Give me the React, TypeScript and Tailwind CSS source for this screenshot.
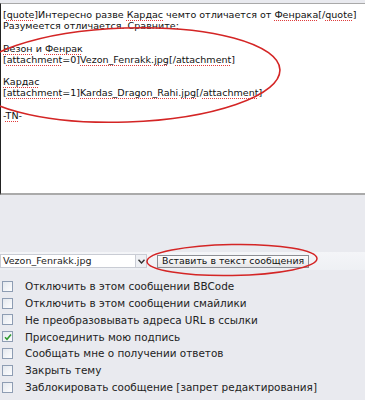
const font = "[font-family:'DejaVu_Sans',Verdana,sans-serif]";
const spell = "underline decoration-dotted decoration-[#e03a3a] underline-offset-[2px]";

function Sp({ children }: { children: React.ReactNode }) {
  return <span className={spell}>{children}</span>;
}

const options = [
  { label: "Отключить в этом сообщении BBCode", checked: false },
  { label: "Отключить в этом сообщении смайлики", checked: false },
  { label: "Не преобразовывать адреса URL в ссылки", checked: false },
  { label: "Присоединить мою подпись", checked: true },
  { label: "Сообщать мне о получении ответов", checked: false },
  { label: "Закрыть тему", checked: false },
  { label: "Заблокировать сообщение [запрет редактирования]", checked: false },
];

function Box({ checked }: { checked: boolean }) {
  return (
    <span className="flex h-[11px] w-[11px] shrink-0 items-center justify-center border border-[#8e9db3] bg-[linear-gradient(135deg,#e4e8ee,#fdfdfe)]">
      {checked && (
        <svg width="8" height="8" viewBox="0 0 8 8">
          <path d="M1 4.2 L3 6.2 L7 1.5" fill="none" stroke="#2f9a2f" strokeWidth="1.6" />
        </svg>
      )}
    </span>
  );
}

export default function App() {
  return (
    <div className={`relative h-[400px] w-[365px] overflow-hidden bg-[#e9eaef] text-black ${font}`}>
      <div className="pt-[3px]">
        <div className="h-[192px] border-t border-l border-b-2 border-t-[#a9a9a9] border-l-[#222] border-b-[#aaaaaa] bg-white pl-[2px] pt-[5px] text-[9.55px] leading-[11.2px] whitespace-nowrap text-[#111]">
          <div>[<Sp>quote</Sp>]Интересно разве <Sp>Кардас</Sp> чемто отличается от <Sp>Фенрака</Sp>[/<Sp>quote</Sp>]</div>
          <div>Разумеется отличается. Сравните:</div>
          <div>&nbsp;</div>
          <div><Sp>Везон</Sp> и <Sp>Фенрак</Sp></div>
          <div>[<Sp>attachment</Sp>=0]<Sp>Vezon_Fenrakk</Sp>.<Sp>jpg</Sp>[/<Sp>attachment</Sp>]</div>
          <div>&nbsp;</div>
          <div><Sp>Кардас</Sp></div>
          <div>[<Sp>attachment</Sp>=1]<Sp>Kardas_Dragon_Rahi</Sp>.<Sp>jpg</Sp>[/<Sp>attachment</Sp>]</div>
          <div>&nbsp;</div>
          <div>-<Sp>TN</Sp>-</div>
        </div>
      </div>

      <div className="mt-[57px] flex h-[18px] items-center bg-[linear-gradient(#f4f5f8,#eef0f4)]">
        <div className="flex h-[14px] w-[147px] items-center justify-between border border-[#c9ccd4] bg-white">
          <span className="pl-[2px] text-[9.5px] leading-none text-[#222]">Vezon_Fenrakk.jpg</span>
          <span className="flex h-[12px] w-[11px] items-center justify-center border-l border-[#c9ccd4] bg-[#eef0f4]">
            <svg width="7" height="5" viewBox="0 0 7 5">
              <path d="M0.5 0.8 L3.5 4 L6.5 0.8" fill="none" stroke="#333" strokeWidth="1.4" />
            </svg>
          </span>
        </div>
        <button className="ml-[10px] h-[13px] border border-[#8d8f95] bg-[linear-gradient(#fdfdfd,#e6e6e8)] px-[4px] text-[9.4px] leading-none text-[#111]">
          Вставить в текст сообщения
        </button>
      </div>

      <div className="mt-[8px] flex flex-col">
        {options.map((o) => (
          <div key={o.label} className="flex h-[16.8px] items-center pl-[2px]">
            <Box checked={o.checked} />
            <span className="ml-[12px] text-[10.45px] leading-none whitespace-nowrap text-[#222]">{o.label}</span>
          </div>
        ))}
      </div>

      <svg className="pointer-events-none absolute left-0 top-0" width="365" height="400" viewBox="0 0 365 400">
        <ellipse cx="126" cy="75" rx="154" ry="47" fill="none" stroke="#d42525" strokeWidth="1.6" transform="rotate(-2 126 75)" />
        <ellipse cx="232" cy="260" rx="85" ry="15.5" fill="none" stroke="#d42525" strokeWidth="1.5" transform="rotate(-1 232 260)" />
      </svg>
    </div>
  );
}
